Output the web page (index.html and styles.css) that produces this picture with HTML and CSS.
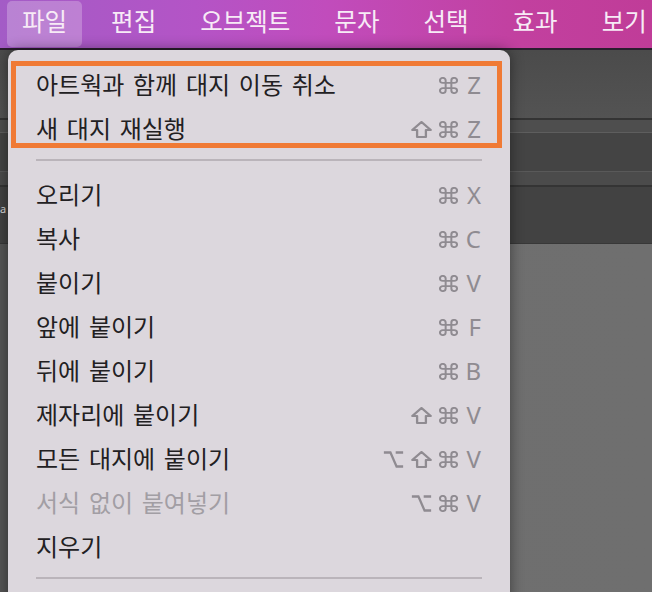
FILE: index.html
```html
<!DOCTYPE html>
<html lang="ko">
<head>
<meta charset="utf-8">
<title>Menu</title>
<link rel="stylesheet" href="styles.css">
</head>
<body>
<div class="screen">
  <div class="menubar">
    <span class="mb-item active">파일</span>
    <span class="mb-item">편집</span>
    <span class="mb-item">오브젝트</span>
    <span class="mb-item">문자</span>
    <span class="mb-item">선택</span>
    <span class="mb-item">효과</span>
    <span class="mb-item">보기</span>
  </div>
  <div class="workspace">
    <div class="band b1"></div>
    <div class="line l-dark2"></div>
    <div class="band b2"></div>
    <div class="line l-light"></div>
    <div class="band b3"></div>
    <div class="line l-light2"></div>
    <div class="band b4"></div>
    <div class="line l-dark2"></div>
    <div class="band b5"><span class="peek">a</span></div>
    <div class="line l-dark1"></div>
    <div class="band b6"></div>

    <div class="menu">
      <div class="row"><span class="label">아트웍과 함께 대지 이동 취소</span><span class="keys"><svg class="ic cmd" viewBox="2 2 20 20" preserveAspectRatio="none"><path d="M15 6v12a3 3 0 1 0 3-3H6a3 3 0 1 0 3 3V6a3 3 0 1 0-3 3h12a3 3 0 1 0-3-3"/></svg><span class="letter">Z</span></span></div>
      <div class="row"><span class="label">새 대지 재실행</span><span class="keys"><svg class="ic shift" viewBox="1.5 2 21 20" preserveAspectRatio="none"><path d="M12 3.2L21.2 12.6H16.4V20.8H7.6V12.6H2.8Z"/></svg><svg class="ic cmd" viewBox="2 2 20 20" preserveAspectRatio="none"><path d="M15 6v12a3 3 0 1 0 3-3H6a3 3 0 1 0 3 3V6a3 3 0 1 0-3 3h12a3 3 0 1 0-3-3"/></svg><span class="letter">Z</span></span></div>
      <div class="sep"></div>
      <div class="row"><span class="label">오리기</span><span class="keys"><svg class="ic cmd" viewBox="2 2 20 20" preserveAspectRatio="none"><path d="M15 6v12a3 3 0 1 0 3-3H6a3 3 0 1 0 3 3V6a3 3 0 1 0-3 3h12a3 3 0 1 0-3-3"/></svg><span class="letter">X</span></span></div>
      <div class="row"><span class="label">복사</span><span class="keys"><svg class="ic cmd" viewBox="2 2 20 20" preserveAspectRatio="none"><path d="M15 6v12a3 3 0 1 0 3-3H6a3 3 0 1 0 3 3V6a3 3 0 1 0-3 3h12a3 3 0 1 0-3-3"/></svg><span class="letter">C</span></span></div>
      <div class="row"><span class="label">붙이기</span><span class="keys"><svg class="ic cmd" viewBox="2 2 20 20" preserveAspectRatio="none"><path d="M15 6v12a3 3 0 1 0 3-3H6a3 3 0 1 0 3 3V6a3 3 0 1 0-3 3h12a3 3 0 1 0-3-3"/></svg><span class="letter">V</span></span></div>
      <div class="row"><span class="label">앞에 붙이기</span><span class="keys"><svg class="ic cmd" viewBox="2 2 20 20" preserveAspectRatio="none"><path d="M15 6v12a3 3 0 1 0 3-3H6a3 3 0 1 0 3 3V6a3 3 0 1 0-3 3h12a3 3 0 1 0-3-3"/></svg><span class="letter">F</span></span></div>
      <div class="row"><span class="label">뒤에 붙이기</span><span class="keys"><svg class="ic cmd" viewBox="2 2 20 20" preserveAspectRatio="none"><path d="M15 6v12a3 3 0 1 0 3-3H6a3 3 0 1 0 3 3V6a3 3 0 1 0-3 3h12a3 3 0 1 0-3-3"/></svg><span class="letter">B</span></span></div>
      <div class="row"><span class="label">제자리에 붙이기</span><span class="keys"><svg class="ic shift" viewBox="1.5 2 21 20" preserveAspectRatio="none"><path d="M12 3.2L21.2 12.6H16.4V20.8H7.6V12.6H2.8Z"/></svg><svg class="ic cmd" viewBox="2 2 20 20" preserveAspectRatio="none"><path d="M15 6v12a3 3 0 1 0 3-3H6a3 3 0 1 0 3 3V6a3 3 0 1 0-3 3h12a3 3 0 1 0-3-3"/></svg><span class="letter">V</span></span></div>
      <div class="row"><span class="label">모든 대지에 붙이기</span><span class="keys"><svg class="ic opt" viewBox="0 3 24 18" preserveAspectRatio="none"><path d="M1 4.5H8.5L15.5 19.5H23M14.5 4.5H23"/></svg><svg class="ic shift" viewBox="1.5 2 21 20" preserveAspectRatio="none"><path d="M12 3.2L21.2 12.6H16.4V20.8H7.6V12.6H2.8Z"/></svg><svg class="ic cmd" viewBox="2 2 20 20" preserveAspectRatio="none"><path d="M15 6v12a3 3 0 1 0 3-3H6a3 3 0 1 0 3 3V6a3 3 0 1 0-3 3h12a3 3 0 1 0-3-3"/></svg><span class="letter">V</span></span></div>
      <div class="row disabled"><span class="label">서식 없이 붙여넣기</span><span class="keys"><svg class="ic opt" viewBox="0 3 24 18" preserveAspectRatio="none"><path d="M1 4.5H8.5L15.5 19.5H23M14.5 4.5H23"/></svg><svg class="ic cmd" viewBox="2 2 20 20" preserveAspectRatio="none"><path d="M15 6v12a3 3 0 1 0 3-3H6a3 3 0 1 0 3 3V6a3 3 0 1 0-3 3h12a3 3 0 1 0-3-3"/></svg><span class="letter">V</span></span></div>
      <div class="row"><span class="label">지우기</span></div>
      <div class="sep"></div>
      <div class="annot"></div>
    </div>
  </div>
</div>
</body>
</html>
```

FILE: styles.css
```css
* { box-sizing: border-box; }
html, body { margin: 0; padding: 0; }
body {
  width: 652px;
  height: 592px;
  overflow: hidden;
  background: #4a4a4a;
  font-family: "Noto Sans CJK KR", "Noto Sans", sans-serif;
}
.screen {
  width: 652px;
  height: 592px;
  display: flex;
  flex-direction: column;
  overflow: hidden;
}
.menubar {
  height: 50px;
  flex: none;
  display: flex;
  align-items: flex-start;
  gap: 14px;
  padding: 1px 0 0 7px;
  background: linear-gradient(90deg, #a35cc6 0%, #b454c6 30%, #c14cbc 50%, #c2409f 80%, #c03c98 100%);
  border-bottom: 2px solid #2a1e2e;
  white-space: nowrap;
  overflow: hidden;
}
.mb-item {
  height: 46px;
  line-height: 40px;
  padding: 0 15px;
  font-size: 24.5px;
  color: #f7ebf6;
  border-radius: 5px;
}
.mb-item:last-child { padding-right: 0; }
.mb-item.active {
  background: rgba(255, 255, 255, 0.24);
}
.workspace {
  position: relative;
  flex: 1;
  display: flex;
  flex-direction: column;
}
.band { flex: none; }
.b1 { height: 68px; background: linear-gradient(180deg, #4b4b4b, #535353); }
.b2 { height: 12px; background: #4e4e4e; }
.b3 { height: 38px; background: #444444; }
.b4 { height: 13px; background: #4b4b4b; }
.b5 { height: 56px; background: #424242; position: relative; }
.b6 { flex: 1; background: linear-gradient(90deg, #555555 0, #555555 12px, #6e6e6e 60px, #6f6f6f 100%); }
.line { flex: none; }
.l-dark2 { height: 2px; background: #343434; }
.l-dark1 { height: 1px; background: #383838; }
.l-light { height: 1px; background: #5e5e5e; }
.l-light2 { height: 1px; background: #595959; }
.peek {
  position: absolute;
  left: 0;
  top: 16px;
  font-family: "Noto Sans", sans-serif;
  font-size: 11px;
  line-height: 12px;
  color: #d8d8d8;
}
.menu {
  position: absolute;
  left: 8px;
  top: 0;
  width: 502px;
  height: 560px;
  background: #dcd7dd;
  border-radius: 10px 10px 0 0;
  padding-top: 11px;
  box-shadow: 0 0 14px rgba(0, 0, 0, 0.45);
}
.row {
  height: 44px;
  display: flex;
  align-items: center;
  justify-content: space-between;
  padding: 0 29px 0 28px;
  font-size: 24px;
  word-spacing: 2px;
  color: #222022;
}
.row.disabled .label { color: #a29ea4; }
.keys {
  display: flex;
  align-items: center;
  gap: 7px;
  padding-top: 4px;
  color: #8f8b91;
}
.ic {
  display: block;
  height: 17px;
  fill: none;
  stroke: #8f8b91;
  stroke-width: 2.3;
  stroke-linejoin: round;
  stroke-linecap: round;
}
.cmd { width: 19px; stroke-width: 2.1; }
.shift { width: 21px; height: 17px; stroke-width: 2.3; }
.opt { width: 21px; stroke-width: 2.6; stroke-linecap: butt; stroke-linejoin: miter; }
.letter {
  font-family: "Noto Sans", sans-serif;
  font-size: 24px;
  line-height: 24px;
  width: 17px;
  margin-left: -1px;
  text-align: right;
  color: #8f8b91;
}
.sep {
  height: 2px;
  margin: 10px 28px;
  background: #bab4ba;
}
.annot {
  position: absolute;
  left: 3px;
  top: 11px;
  width: 491px;
  height: 87px;
  border: 5px solid #f07a35;
}
```
